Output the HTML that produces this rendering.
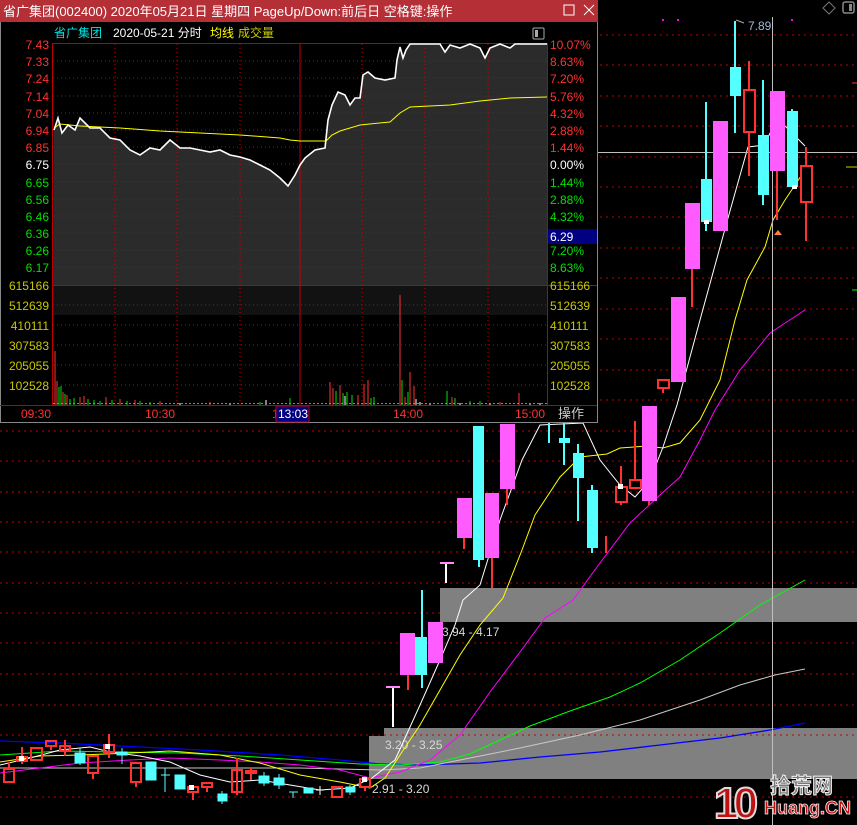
<!DOCTYPE html>
<html><head><meta charset="utf-8"><style>
html,body{margin:0;padding:0;background:#000;width:857px;height:825px;overflow:hidden}
svg{display:block}
text{font-family:"Liberation Sans","Noto Sans CJK SC",sans-serif}
</style></head><body>
<svg width="857" height="825" viewBox="0 0 857 825" xmlns="http://www.w3.org/2000/svg">
<rect width="857" height="825" fill="#000"/>
<g stroke="#c00000" stroke-width="1" stroke-dasharray="2,4">
<line x1="0" y1="35" x2="857" y2="35"/><line x1="0" y1="65" x2="857" y2="65"/><line x1="0" y1="96" x2="857" y2="96"/><line x1="0" y1="126" x2="857" y2="126"/><line x1="0" y1="157" x2="857" y2="157"/><line x1="0" y1="187" x2="857" y2="187"/><line x1="0" y1="217" x2="857" y2="217"/><line x1="0" y1="248" x2="857" y2="248"/><line x1="0" y1="278" x2="857" y2="278"/><line x1="0" y1="309" x2="857" y2="309"/><line x1="0" y1="339" x2="857" y2="339"/><line x1="0" y1="370" x2="857" y2="370"/><line x1="0" y1="400" x2="857" y2="400"/><line x1="0" y1="431" x2="857" y2="431"/><line x1="0" y1="461" x2="857" y2="461"/><line x1="0" y1="492" x2="857" y2="492"/><line x1="0" y1="522" x2="857" y2="522"/><line x1="0" y1="552" x2="857" y2="552"/><line x1="0" y1="583" x2="857" y2="583"/><line x1="0" y1="613" x2="857" y2="613"/><line x1="0" y1="643" x2="857" y2="643"/><line x1="0" y1="674" x2="857" y2="674"/><line x1="0" y1="705" x2="857" y2="705"/><line x1="0" y1="735" x2="857" y2="735"/><line x1="0" y1="797" x2="857" y2="797"/>
</g>
<rect x="440" y="588" width="417" height="34" fill="#808080"/>
<rect x="384" y="728" width="473" height="8" fill="#808080"/>
<rect x="369" y="736" width="488" height="43" fill="#808080"/>
<line x1="384" y1="735" x2="857" y2="735" stroke="#c00000" stroke-dasharray="2,4"/>
<g fill="#d8d8d8" font-size="12">
<text x="442" y="636">3.94 - 4.17</text>
<text x="385" y="749">3.20 - 3.25</text>
<text x="372" y="793">2.91 - 3.20</text>
</g>
<polyline fill="none" stroke="#0000ff" stroke-width="1.3" points="0,741 60,743 120,746 200,750 280,755 340,760 380,764 420,765 480,763 540,757 600,752 660,745 720,738 770,730 805,723"/>
<polyline fill="none" stroke="#c8c8c8" stroke-width="1" points="0,768 100,768 200,768 300,768 380,770 420,768 470,758 520,748 580,735 640,720 700,700 740,685 775,675 805,669"/>
<polyline fill="none" stroke="#00ff00" stroke-width="1" points="0,755 60,751 120,752 180,753 240,756 300,760 360,764 400,765 440,762 470,754 500,740 530,726 570,711 610,697 640,683 680,660 720,633 760,605 805,580"/>
<polyline fill="none" stroke="#ff00ff" stroke-width="1" points="0,773 40,768 80,763 130,760 170,758 220,760 260,762 300,765 340,770 370,778 400,772 430,760 460,735 490,692 520,652 545,618 573,600 597,567 630,523 660,495 680,477 700,440 715,410 740,370 770,333 805,310"/>
<polyline fill="none" stroke="#ffff00" stroke-width="1" points="0,762 40,756 80,755 130,753 170,751 220,755 260,763 300,775 340,782 370,788 385,778 400,755 420,725 440,690 460,655 480,625 503,598 522,550 535,515 560,477 580,457 607,454 620,448 647,446 663,448 680,443 700,420 720,380 735,320 747,280 765,247 773,220 785,200 807,167"/>
<polyline fill="none" stroke="#ffffff" stroke-width="1" points="0,765 30,758 60,750 90,747 110,752 140,756 170,762 200,775 230,782 260,780 290,785 320,790 350,788 372,778 395,760 420,705 440,660 455,625 463,600 480,585 500,520 522,460 540,425 583,423 600,460 620,485 635,497 650,480 663,447 677,405 700,320 728,218 748,147 765,145 770,133 785,126 805,146"/>
<line x1="772.5" y1="17" x2="772.5" y2="825" stroke="#c0c0c0" stroke-width="1"/>
<line x1="597" y1="152.5" x2="857" y2="152.5" stroke="#c0c0c0" stroke-width="1"/>
<g stroke="#ff3232" stroke-width="2" fill="none">
<rect x="4" y="769" width="10" height="13"/><line x1="9" y1="762" x2="9" y2="769"/>
<rect x="17" y="757" width="10" height="4"/><line x1="22" y1="747" x2="22" y2="764"/>
<rect x="31" y="748" width="11" height="12"/>
<rect x="46" y="741" width="10" height="5"/><line x1="51" y1="746" x2="51" y2="750"/>
<rect x="60" y="746" width="10" height="5"/><line x1="65" y1="740" x2="65" y2="756"/>
<rect x="88" y="756" width="10" height="17"/><line x1="93" y1="773" x2="93" y2="779"/>
<rect x="104" y="745" width="10" height="7"/><line x1="109" y1="734" x2="109" y2="758"/>
<rect x="131" y="763" width="10" height="19"/><line x1="136" y1="782" x2="136" y2="787"/>
<rect x="188" y="787" width="10" height="5"/><line x1="193" y1="792" x2="193" y2="800"/>
<rect x="202" y="783" width="10" height="4"/><line x1="207" y1="787" x2="207" y2="792"/>
<rect x="232" y="770" width="10" height="22"/><line x1="237" y1="758" x2="237" y2="795"/>
<rect x="246" y="771" width="10" height="2"/><line x1="251" y1="768" x2="251" y2="780"/>
<rect x="332" y="787" width="10" height="10"/>
<rect x="360" y="779" width="10" height="8"/><line x1="365" y1="787" x2="365" y2="791"/>
</g>
<g fill="#fff"><rect x="19" y="756" width="5" height="5"/><rect x="105" y="744" width="5" height="5"/><rect x="362" y="777" width="5" height="5"/><rect x="189" y="785" width="5" height="5"/></g>
<g fill="#54ffff" stroke="#54ffff">
<rect x="75" y="753" width="10" height="10"/><line x1="80" y1="748" x2="80" y2="765"/>
<rect x="117" y="752" width="10" height="3"/><line x1="122" y1="748" x2="122" y2="764"/>
<rect x="146" y="762" width="10" height="18"/>
<line x1="161" y1="775" x2="170" y2="775"/><line x1="165" y1="768" x2="165" y2="792"/>
<rect x="175" y="775" width="10" height="14"/>
<rect x="218" y="794" width="9" height="7"/><line x1="222" y1="791" x2="222" y2="804"/>
<rect x="259" y="776" width="10" height="7"/><line x1="264" y1="772" x2="264" y2="786"/>
<rect x="274" y="778" width="10" height="7"/><line x1="279" y1="774" x2="279" y2="789"/>
<line x1="289" y1="792" x2="298" y2="792"/><line x1="293" y1="792" x2="293" y2="798"/>
<rect x="304" y="788" width="9" height="5"/>
<rect x="346" y="787" width="9" height="5"/><line x1="350" y1="785" x2="350" y2="795"/>
</g>
<g stroke="#fff"><line x1="316" y1="790" x2="324" y2="790"/><line x1="320" y1="786" x2="320" y2="795"/></g>
<g stroke="#fff" stroke-width="2"><line x1="393" y1="687" x2="393" y2="727"/><line x1="446" y1="564" x2="446" y2="583"/></g>
<g fill="#ff88ff"><rect x="386" y="686" width="14" height="2"/><rect x="440" y="562" width="14" height="2"/></g>
<g stroke="#ff3232" stroke-width="2">
<line x1="408" y1="675" x2="408" y2="690"/><line x1="464" y1="538" x2="464" y2="549"/><line x1="492" y1="558" x2="492" y2="588"/><line x1="507" y1="489" x2="507" y2="505"/><line x1="606" y1="536" x2="606" y2="553"/><line x1="649" y1="501" x2="649" y2="505"/><line x1="692" y1="269" x2="692" y2="307"/><line x1="777" y1="171" x2="777" y2="220"/>
<line x1="621" y1="466" x2="621" y2="505"/><line x1="635" y1="421" x2="635" y2="489"/><line x1="663" y1="389" x2="663" y2="393"/><line x1="749" y1="61" x2="749" y2="176"/><line x1="806" y1="147" x2="806" y2="241"/>
</g>
<g fill="#ff5cff">
<rect x="400" y="633" width="15" height="42"/><rect x="428" y="622" width="15" height="41"/><rect x="457" y="498" width="15" height="40"/><rect x="485" y="493" width="14" height="65"/><rect x="500" y="424" width="15" height="65"/><rect x="642" y="406" width="15" height="95"/><rect x="671" y="297" width="15" height="85"/><rect x="685" y="203" width="15" height="66"/><rect x="713" y="121" width="15" height="110"/><rect x="770" y="91" width="15" height="80"/>
</g>
<g stroke="#54ffff" stroke-width="2">
<line x1="422" y1="590" x2="422" y2="688"/><line x1="479" y1="426" x2="479" y2="567"/><line x1="549" y1="423" x2="549" y2="443"/><line x1="564" y1="423" x2="564" y2="465"/><line x1="578" y1="444" x2="578" y2="521"/><line x1="592" y1="485" x2="592" y2="553"/><line x1="706" y1="102" x2="706" y2="231"/><line x1="735" y1="21" x2="735" y2="133"/><line x1="763" y1="80" x2="763" y2="205"/><line x1="792" y1="109" x2="792" y2="187"/>
</g>
<g fill="#54ffff">
<rect x="415" y="637" width="12" height="38"/><rect x="473" y="426" width="11" height="134"/><rect x="559" y="438" width="11" height="5"/><rect x="573" y="453" width="11" height="25"/><rect x="587" y="490" width="11" height="58"/><rect x="701" y="179" width="11" height="43"/><rect x="730" y="67" width="11" height="29"/><rect x="758" y="135" width="11" height="60"/><rect x="787" y="111" width="11" height="76"/>
</g>
<g fill="#000" stroke="#ff3232" stroke-width="2">
<rect x="616" y="487" width="11" height="15"/><rect x="630" y="480" width="11" height="8"/><rect x="658" y="380" width="11" height="8"/><rect x="744" y="90" width="11" height="42"/><rect x="801" y="166" width="11" height="36"/>
</g>
<g fill="#fff"><rect x="618" y="484" width="5" height="5"/><rect x="704" y="220" width="5" height="4"/><rect x="792" y="185" width="5" height="4"/></g>
<path d="M774 235 L778 230 L782 235 Z" fill="#ff8040"/>
<g fill="#ff00ff"><rect x="662" y="19" width="2" height="2"/><rect x="677" y="19" width="2" height="2"/><rect x="791" y="19" width="2" height="2"/></g>
<path d="M736 20 L744 23" stroke="#aaa" fill="none"/>
<text x="748" y="30" font-size="12" fill="#a0b8d8">7.89</text>
<path d="M829 2 L835 8 L829 14 L823 8 Z" stroke="#777" fill="none"/>
<rect x="843" y="2" width="11" height="11" rx="2" stroke="#888" fill="none" stroke-width="1.5"/><rect x="849" y="4" width="3" height="7" fill="#888"/>
<line x1="852" y1="83" x2="857" y2="83" stroke="#ff3232"/><line x1="846" y1="167" x2="857" y2="167" stroke="#cccc00"/><line x1="852" y1="290" x2="857" y2="290" stroke="#00ff00"/>

<rect x="0" y="0" width="598" height="423" fill="#000"/>
<rect x="0" y="0" width="598" height="22" fill="#b52f37"/>
<text x="3" y="16" font-size="13" fill="#fff">省广集团(002400) 2020年05月21日 星期四 PageUp/Down:前后日 空格键:操作</text>
<rect x="564" y="5" width="10" height="10" fill="none" stroke="#fff"/>
<path d="M584 5 L594 15 M594 5 L584 15" stroke="#fff"/>
<rect x="0" y="22" width="1" height="401" fill="#888"/><rect x="597" y="22" width="1" height="401" fill="#888"/><rect x="0" y="422" width="598" height="1" fill="#888"/>
<text x="54" y="37" font-size="12" fill="#00e5e5">省广集团</text>
<text x="113" y="37" font-size="12" fill="#fff">2020-05-21 分时</text>
<text x="210" y="37" font-size="12" fill="#ffff00">均线</text>
<text x="238" y="37" font-size="12" fill="#cccc00">成交量</text>
<rect x="533" y="28" width="11" height="11" rx="1" fill="none" stroke="#aaa"/><rect x="535" y="30" width="3" height="7" fill="#aaa"/>
<polygon fill="#2b2b2b" points="54,130 58,118 62,133 68,125 75,130 80,118 90,128 100,128 110,138 120,140 130,150 140,155 150,148 160,150 170,140 180,148 190,148 200,150 210,152 220,150 230,155 240,157 250,160 260,165 270,170 280,178 288,186 295,175 300,165 305,158 315,150 325,148 328,120 332,105 338,92 345,95 350,105 355,98 360,98 363,75 368,72 375,78 385,80 395,78 397,60 400,47 403,58 406,50 410,44 420,44 440,44 445,52 450,45 460,48 470,44 480,48 485,58 490,48 500,44 510,48 515,44 547,44 547,285 53,285"/>
<rect x="53" y="285" width="494" height="30" fill="#121212"/>
<g stroke="#c00000" stroke-dasharray="1,3">
<line x1="53" y1="61" x2="547" y2="61"/><line x1="53" y1="78" x2="547" y2="78"/><line x1="53" y1="96" x2="547" y2="96"/><line x1="53" y1="113" x2="547" y2="113"/><line x1="53" y1="130" x2="547" y2="130"/><line x1="53" y1="147" x2="547" y2="147"/><line x1="53" y1="164" x2="547" y2="164"/><line x1="53" y1="182" x2="547" y2="182"/><line x1="53" y1="199" x2="547" y2="199"/><line x1="53" y1="216" x2="547" y2="216"/><line x1="53" y1="233" x2="547" y2="233"/><line x1="53" y1="250" x2="547" y2="250"/><line x1="53" y1="267" x2="547" y2="267"/>
<line x1="53" y1="305" x2="547" y2="305"/><line x1="53" y1="325" x2="547" y2="325"/><line x1="53" y1="345" x2="547" y2="345"/><line x1="53" y1="365" x2="547" y2="365"/><line x1="53" y1="385" x2="547" y2="385"/>
<line x1="115" y1="44" x2="115" y2="405"/><line x1="177" y1="44" x2="177" y2="405"/><line x1="240" y1="44" x2="240" y2="405"/><line x1="362" y1="44" x2="362" y2="405"/><line x1="425" y1="44" x2="425" y2="405"/><line x1="488" y1="44" x2="488" y2="405"/>
</g>
<g stroke="#c00000" fill="none">
<rect x="52.5" y="43.5" width="495" height="362"/>
<line x1="52" y1="285.5" x2="597" y2="285.5"/>
<line x1="300" y1="44" x2="300" y2="405"/>
<line x1="0" y1="405.5" x2="597" y2="405.5"/>
</g>
<polyline fill="none" stroke="#ffff00" stroke-width="1" points="54,128 60,124 80,126 120,128 160,131 200,133 240,135 280,138 290,140 300,141 326,141 332,135 340,131 360,125 390,122 400,113 410,107 450,105 480,101 510,98 547,97"/>
<polyline fill="none" stroke="#fff" stroke-width="1.6" points="54,130 58,118 62,133 68,125 75,130 80,118 90,128 100,128 110,138 120,140 130,150 140,155 150,148 160,150 170,140 180,148 190,148 200,150 210,152 220,150 230,155 240,157 250,160 260,165 270,170 280,178 288,186 295,175 300,165 305,158 315,150 325,148 328,120 332,105 338,92 345,95 350,105 355,98 360,98 363,75 368,72 375,78 385,80 395,78 397,60 400,47 403,58 406,50 410,44 420,44 440,44 445,52 450,45 460,48 470,44 480,48 485,58 490,48 500,44 510,48 515,44 547,44"/>
<g stroke="#ff3232" stroke-width="1">
<line x1="55" y1="405" x2="55" y2="351"/><line x1="57" y1="405" x2="57" y2="381"/><line x1="63" y1="405" x2="63" y2="392"/><line x1="67" y1="405" x2="67" y2="395"/><line x1="80" y1="405" x2="80" y2="397"/><line x1="84" y1="405" x2="84" y2="396"/><line x1="106" y1="405" x2="106" y2="397"/><line x1="120" y1="405" x2="120" y2="399"/><line x1="135" y1="405" x2="135" y2="400"/><line x1="160" y1="405" x2="160" y2="401"/><line x1="210" y1="405" x2="210" y2="402"/><line x1="330" y1="405" x2="330" y2="382"/><line x1="333" y1="405" x2="333" y2="388"/><line x1="340" y1="405" x2="340" y2="385"/><line x1="358" y1="405" x2="358" y2="395"/><line x1="364" y1="405" x2="364" y2="384"/><line x1="368" y1="405" x2="368" y2="380"/><line x1="400" y1="405" x2="400" y2="295"/><line x1="405" y1="405" x2="405" y2="397"/><line x1="410" y1="405" x2="410" y2="372"/><line x1="414" y1="405" x2="414" y2="386"/><line x1="452" y1="405" x2="452" y2="397"/><line x1="519" y1="405" x2="519" y2="393"/><line x1="500" y1="405" x2="500" y2="402"/>
</g>
<g stroke="#00e000" stroke-width="1">
<line x1="59" y1="405" x2="59" y2="387"/><line x1="61" y1="405" x2="61" y2="386"/><line x1="65" y1="405" x2="65" y2="394"/><line x1="70" y1="405" x2="70" y2="399"/><line x1="74" y1="405" x2="74" y2="398"/><line x1="88" y1="405" x2="88" y2="399"/><line x1="94" y1="405" x2="94" y2="400"/><line x1="100" y1="405" x2="100" y2="401"/><line x1="112" y1="405" x2="112" y2="400"/><line x1="127" y1="405" x2="127" y2="401"/><line x1="140" y1="405" x2="140" y2="401"/><line x1="150" y1="405" x2="150" y2="402"/><line x1="260" y1="405" x2="260" y2="402"/><line x1="290" y1="405" x2="290" y2="398"/><line x1="336" y1="405" x2="336" y2="391"/><line x1="343" y1="405" x2="343" y2="393"/><line x1="347" y1="405" x2="347" y2="392"/><line x1="352" y1="405" x2="352" y2="395"/><line x1="371" y1="405" x2="371" y2="398"/><line x1="374" y1="405" x2="374" y2="397"/><line x1="402" y1="405" x2="402" y2="380"/><line x1="408" y1="405" x2="408" y2="392"/><line x1="447" y1="405" x2="447" y2="391"/><line x1="455" y1="405" x2="455" y2="398"/><line x1="470" y1="405" x2="470" y2="401"/><line x1="480" y1="405" x2="480" y2="401"/>
</g>
<g stroke="#fff" stroke-width="1">
<line x1="180" y1="405" x2="180" y2="403"/><line x1="230" y1="405" x2="230" y2="403"/><line x1="266" y1="405" x2="266" y2="400"/><line x1="345" y1="405" x2="345" y2="396"/><line x1="416" y1="405" x2="416" y2="399"/><line x1="420" y1="405" x2="420" y2="402"/><line x1="430" y1="405" x2="430" y2="403"/><line x1="460" y1="405" x2="460" y2="403"/><line x1="490" y1="405" x2="490" y2="403"/><line x1="530" y1="405" x2="530" y2="403"/><line x1="540" y1="405" x2="540" y2="403"/>
</g>
<line x1="53" y1="403.5" x2="547" y2="403.5" stroke="#888" stroke-dasharray="2,2"/>
<g font-size="12" text-anchor="end">
<g fill="#ff3232"><text x="49" y="49">7.43</text><text x="49" y="66">7.33</text><text x="49" y="83">7.24</text><text x="49" y="101">7.14</text><text x="49" y="118">7.04</text><text x="49" y="135">6.94</text><text x="49" y="152">6.85</text></g>
<text x="49" y="169" fill="#fff">6.75</text>
<g fill="#00e000"><text x="49" y="187">6.65</text><text x="49" y="204">6.56</text><text x="49" y="221">6.46</text><text x="49" y="238">6.36</text><text x="49" y="255">6.26</text><text x="49" y="272">6.17</text></g>
<g fill="#c8c800"><text x="49" y="290">615166</text><text x="49" y="310">512639</text><text x="49" y="330">410111</text><text x="49" y="350">307583</text><text x="49" y="370">205055</text><text x="49" y="390">102528</text></g>
</g>
<g font-size="12">
<g fill="#ff3232"><text x="550" y="49">10.07%</text><text x="550" y="66">8.63%</text><text x="550" y="83">7.20%</text><text x="550" y="101">5.76%</text><text x="550" y="118">4.32%</text><text x="550" y="135">2.88%</text><text x="550" y="152">1.44%</text></g>
<text x="550" y="169" fill="#fff">0.00%</text>
<g fill="#00e000"><text x="550" y="187">1.44%</text><text x="550" y="204">2.88%</text><text x="550" y="221">4.32%</text></g>
<rect x="548" y="229" width="49" height="15" fill="#000080"/><text x="550" y="241" fill="#fff">6.29</text>
<g fill="#00e000"><text x="550" y="255">7.20%</text><text x="550" y="272">8.63%</text></g>
<g fill="#c8c800"><text x="550" y="290">615166</text><text x="550" y="310">512639</text><text x="550" y="330">410111</text><text x="550" y="350">307583</text><text x="550" y="370">205055</text><text x="550" y="390">102528</text></g>
<g fill="#ff3232"><text x="21" y="418">09:30</text><text x="145" y="418">10:30</text><text x="393" y="418">14:00</text><text x="515" y="418">15:00</text></g>
<text x="272" y="418" fill="#ff3232">1</text>
<rect x="276" y="406" width="33" height="16" fill="#000080" stroke="#c00000"/>
<text x="278" y="418" fill="#fff">13:03</text>
<text x="558" y="418" fill="#ccc" font-size="13">操作</text>
</g>
<g font-weight="bold">
<text x="714" y="818" font-size="44" fill="#c01010" stroke="#ddd" stroke-width="2" letter-spacing="-5">10</text>
<text x="770" y="793" font-size="21" fill="#777" stroke="#eee" stroke-width="1">拾荒网</text>
<text x="764" y="814" font-size="18" fill="#c01010" stroke="#eee" stroke-width="0.8">Huang.CN</text>
</g>
</svg>
</body></html>
